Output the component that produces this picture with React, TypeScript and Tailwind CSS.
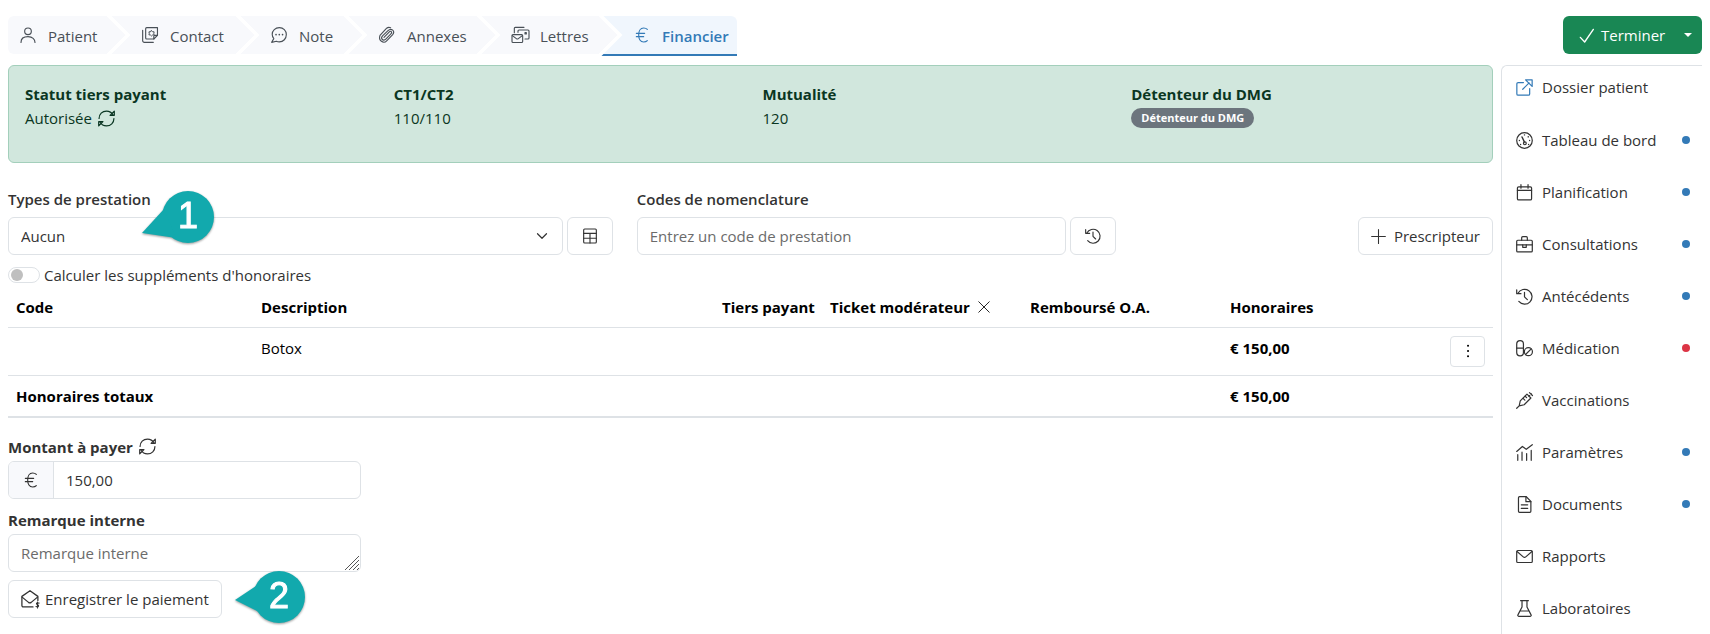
import { useState, type ReactNode } from "react";

type IconName =
  | "user" | "contact" | "note" | "clip" | "letters" | "euro" | "sync" | "external" | "gauge"
  | "calendar" | "briefcase" | "history" | "pills" | "syringe" | "chart" | "file" | "mail" | "flask"
  | "table" | "plus" | "check" | "close" | "dots" | "mailPaid" | "chevron";

const icons: Record<IconName, ReactNode> = {
  user: <><circle cx="12" cy="6.5" r="5" /><path d="M1.5 23.2c0-5 3.8-8.7 10.500-8.700s10.500 3.700 10.500 8.700" /></>,
  contact: <><path d="M5.500 2.500A1.500 1.500 0 0 1 7 1h16.200v11.500l-5.500 5.500H7a1.500 1.500 0 0 1-1.500-1.500z" /><path d="M23 12.500h-3.800a1.500 1.500 0 0 0-1.500 1.500v4" /><path d="M1 5v15.500A2.500 2.500 0 0 0 3.500 23H17" /><path d="M14.300 5.500l1.600 1.500 2.300.300-.5 2.200.5 2.200-2.300.3-1.600 1.500-1.600-1.500-2.300-.3.500-2.200-.5-2.200 2.300-.3z" strokeWidth="1.500" /></>,
  note: <><path d="M12.500 1C6.400 1 1.800 5.300 1.800 11c0 2.500.9 4.700 2.400 6.400L1 23l7-1.600c1.400.6 2.900.9 4.500.9 6 0 10.500-4.800 10.500-11S18.500 1 12.500 1z" /><path d="M7.500 11.500h.1M12.400 11.500h.1M17.300 11.500h.1" strokeWidth="2.400" /></>,
  clip: <path d="M7.500 15.500l8-8.300c2-2.100 4.800.6 2.700 2.700l-8 8.300c-3.800 3.900-8.600-.8-4.900-4.800L13.500 5.500c5-5 11.500 1 6.700 6.300l-8.700 9C6.800 25.600-1.500 20.500 1.500 12.500L11.500 1.800c1.500-1.300 4-1.500 6-.8" />,
  letters: <><path d="M3.500 8.500V2A1.500 1.500 0 0 1 5 .5h13" /><path d="M9 8V6a1.500 1.500 0 0 1 1.500-1.500H24A1.500 1.500 0 0 1 25.500 6v10.500A1.500 1.500 0 0 1 24 18h-4.500" /><rect x="0" y="11.500" width="16" height="11.800" rx="1.500" /><path d="M.5 13l6 4.500a2.500 2.500 0 0 0 3 0l6-4.500" /><path d="M19.500 8.500h2v2h-2z" /></>,
  euro: <path d="M20 3.500C18.500 2 16.500 1.500 14.500 1.500 9.500 1.500 7 6 7 12s2.500 10.500 7.500 10.500c2 0 4-.5 5.500-2M3.500 9.500h12.500M3.500 14.500h11" />,
  sync: <><path d="M1.500 12C1.500 6 6 1.500 12 1.500c4 0 7.300 2 9.300 5.500M22.500 12c0 6-4.500 10.500-10.500 10.500-4 0-7.300-2-9.300-5.500" /><path d="M23 1.500V7.500h-6zM1 22.500V16.500h6z" /></>,
  external: <><path d="M10.500 5H3a1.800 1.800 0 0 0-1.800 1.800V21A1.800 1.800 0 0 0 3 22.800h14.500a1.800 1.800 0 0 0 1.800-1.800v-7.500" /><path d="M9.500 14.500l9-9M13.500 1.200h9.300v9.300z" /></>,
  gauge: <><circle cx="12" cy="12" r="11" /><circle cx="12.500" cy="16" r="2" /><path d="M11.800 14L8.500 7M12 4v.1M4.800 12v.1M19.200 12v.1M17.300 6.800v.1M6.500 17.500v.1M17.800 17.500v.1" strokeWidth="2" /></>,
  calendar: <><rect x="2" y="4" width="20" height="18.500" rx="1.800" /><path d="M2 9h20M7 1v5M17 1v5" /></>,
  briefcase: <><rect x="1" y="6" width="22" height="16.500" rx="1.500" /><path d="M8 6V2.500A1.500 1.500 0 0 1 9.500 1h5A1.500 1.500 0 0 1 16 2.500V6M1 12.500h22" /><path d="M9.500 12.500V16h5v-3.500" /></>,
  history: <><path d="M2.800 7.500A10.500 10.500 0 1 1 4 19" /><path d="M1 2.500V8h6" /><path d="M12 6v6.500l4 4" /></>,
  pills: <><rect x="1" y="1" width="9.500" height="21.500" rx="4.700" /><path d="M1 11.500h9.500" /><circle cx="17.500" cy="16.500" r="5.700" /><path d="M13.500 20.500l8-8" /></>,
  syringe: <><path d="M1 23l3.500-3.500M4.500 19.500L6 12.500 15.500 3l5.500 5.500L11.500 18z" /><path d="M18 5.800l3.500-3.500M19 .8L23.200 5M10 9l2.500 2.500M13 6l2 2" /></>,
  chart: <path d="M1 10.500L9 3.500l5.500 4L23 1M2.500 15v8M8.500 11.500V23M15 13.500V23M21.500 9v14" />,
  file: <><path d="M3.500 2.500A1.500 1.500 0 0 1 5 1h9.500l6.500 6.500v14a1.500 1.500 0 0 1-1.500 1.500H5a1.500 1.500 0 0 1-1.500-1.500z" /><path d="M14 1v7h7M7.500 12.500h9M7.500 17.500h9" /></>,
  mail: <><rect x="1" y="3.500" width="22" height="17" rx="1.500" /><path d="M1.500 5l8.700 7.500a2.800 2.800 0 0 0 3.600 0L22.500 5" /></>,
  flask: <><path d="M6.500 1h11M8.500 1v9L2.700 21a1.300 1.300 0 0 0 1.100 2h16.400a1.300 1.300 0 0 0 1.100-2L15.500 10V1M6 15.500h12" /></>,
  table: <><rect x="2.500" y="1.500" width="19" height="21" rx="1.500" /><path d="M2.500 8h19M2.500 15.300h19M12 8v14.500" /></>,
  plus: <path d="M12 1v22M1 12h22" />,
  check: <path d="M2 15.500l6.500 7L21.500 3.500" strokeWidth="2" />,
  close: <path d="M1.500 1.500l21 21M22.500 1.500l-21 21" />,
  dots: <path d="M12 4h.1M12 12h.1M12 20h.1" strokeWidth="3" />,
  mailPaid: <><path d="M16 22.500H3A1.800 1.800 0 0 1 1.200 20.700V8.500L12 1l10.500 7.500V14" /><path d="M1.500 9.500l8.500 7a3 3 0 0 0 3.600 0L22 9.500" /><path d="M24 17.500c-3-1.500-4.500 1-2.300 2 3 1 1.800 4-1.700 2.500M22 16v8" strokeWidth="1.500" /></>,
  chevron: <path d="M3 7.500l9 9 9-9" strokeWidth="2.400" />,
};

function Icon({ name, className = "size-4" }: { name: IconName; className?: string }) {
  return (
    <svg
      viewBox="0 0 24 24"
      className={`shrink-0 overflow-visible ${className}`}
      fill="none"
      stroke="currentColor"
      strokeWidth="1.7"
      strokeLinecap="round"
      strokeLinejoin="round"
      aria-hidden="true"
    >
      {icons[name]}
    </svg>
  );
}

const tabs: { label: string; icon: IconName; width: string }[] = [
  { label: "Patient", icon: "user", width: "w-[99px]" },
  { label: "Contact", icon: "contact", width: "w-[129px]" },
  { label: "Note", icon: "note", width: "w-[108px]" },
  { label: "Annexes", icon: "clip", width: "w-[133px]" },
  { label: "Lettres", icon: "letters", width: "w-[122px]" },
  { label: "Financier", icon: "euro", width: "w-[138px]" },
];

const menu: { label: string; icon: IconName; dot?: string }[] = [
  { label: "Tableau de bord", icon: "gauge", dot: "bg-[#337ab7]" },
  { label: "Planification", icon: "calendar", dot: "bg-[#337ab7]" },
  { label: "Consultations", icon: "briefcase", dot: "bg-[#337ab7]" },
  { label: "Antécédents", icon: "history", dot: "bg-[#337ab7]" },
  { label: "Médication", icon: "pills", dot: "bg-[#dc3545]" },
  { label: "Vaccinations", icon: "syringe" },
  { label: "Paramètres", icon: "chart", dot: "bg-[#337ab7]" },
  { label: "Documents", icon: "file", dot: "bg-[#337ab7]" },
  { label: "Rapports", icon: "mail" },
  { label: "Laboratoires", icon: "flask" },
];

const control = "h-[38px] rounded-md border border-[#dee2e6] bg-white";

function Tabs() {
  return (
    <nav className="flex items-start">
      {tabs.map((tab, i) => {
        const active = tab.label === "Financier";
        return (
          <a
            key={tab.label}
            href={`#${tab.label.toLowerCase()}`}
            className={`relative flex items-center ${tab.width} ${i === 0 ? "rounded-l-md pl-3" : "pl-[35px]"} ${
              active
                ? "h-10 rounded-tr-md border-b-2 border-[#337ab7] bg-[#f0f6fd] font-semibold text-[#337ab7]"
                : "h-[38px] bg-[#f8f9fc] text-[#495057]"
            }`}
          >
            {i > 0 && (
              <svg viewBox="0 0 26 40" className="absolute top-0 left-0 h-10 w-[26px]" aria-hidden="true">
                <path d="M0 0L22 19 2 38H0z" fill="#f8f9fc" />
                <path d="M0 38h3L1 40H0z" fill="#fff" />
                <path d="M0 -2L21 19 0 40" fill="none" stroke="#fff" strokeWidth="3.500" />
              </svg>
            )}
            <Icon name={tab.icon} />
            <span className="ml-3 pt-px">{tab.label}</span>
          </a>
        );
      })}
    </nav>
  );
}

function StatusBanner() {
  return (
    <section className="min-h-[98px] rounded-md border border-[#a3cfbb] bg-[#d1e7dd] py-4 pl-4 text-[#0a3622]">
      <div className="-mr-2 grid grid-cols-4">
        <div>
          <h2 className="font-bold">Statut tiers payant</h2>
          <p className="flex items-center gap-1.5">
            Autorisée
            <button type="button" aria-label="Actualiser le statut"><Icon name="sync" className="size-[17px]" /></button>
          </p>
        </div>
        <div>
          <h2 className="font-bold">CT1/CT2</h2>
          <p>110/110</p>
        </div>
        <div>
          <h2 className="font-bold">Mutualité</h2>
          <p>120</p>
        </div>
        <div>
          <h2 className="font-bold">Détenteur du DMG</h2>
          <p className="flex h-6 items-center">
            <span className="rounded-full bg-[#6c757d] px-2.5 text-[11px] leading-5 font-bold text-white">
              Détenteur du DMG
            </span>
          </p>
        </div>
      </div>
    </section>
  );
}

function BillingForm() {
  const [supplements, setSupplements] = useState(false);

  return (
    <section className="mt-6">
      <div className="grid grid-cols-12 items-end gap-x-6">
        <div className="relative col-span-5">
          <label htmlFor="type" className="mb-1.5 block font-semibold">Types de prestation</label>
          <div className="flex gap-1">
            <div className="relative flex-1">
              <select id="type" className={`${control} w-full appearance-none px-3`}>
                <option>Aucun</option>
              </select>
              <Icon name="chevron" className="pointer-events-none absolute top-[13px] right-[15px] size-3" />
            </div>
            <button type="button" aria-label="Tableau" className={`${control} flex w-[46px] items-center justify-center`}>
              <Icon name="table" />
            </button>
          </div>
          <div className="absolute top-[3px] left-[134px]">
            <Callout n={1} />
          </div>
        </div>
        <div className="col-span-4">
          <label htmlFor="code" className="mb-1.5 block font-semibold">Codes de nomenclature</label>
          <div className="flex gap-1">
            <input
              id="code"
              placeholder="Entrez un code de prestation"
              className={`${control} min-w-0 flex-1 px-3 placeholder:text-[#6b6b6b]`}
            />
            <button type="button" aria-label="Historique" className={`${control} flex w-[46px] items-center justify-center`}>
              <Icon name="history" />
            </button>
          </div>
        </div>
        <div className="col-span-3 flex justify-end">
          <button type="button" className={`${control} flex items-center gap-2 px-3`}>
            <Icon name="plus" className="size-[15px]" />
            Prescripteur
          </button>
        </div>
      </div>

      <label className="mt-2 flex items-center gap-1">
        <input
          type="checkbox"
          role="switch"
          checked={supplements}
          onChange={(e) => setSupplements(e.target.checked)}
          className="h-4 w-8 appearance-none rounded-full border border-[#dee2e6] bg-white before:mt-px before:ml-0.5 before:block before:size-3 before:rounded-full before:bg-[#bfbfbf] checked:bg-[#337ab7] checked:before:ml-4 checked:before:bg-white"
        />
        Calculer les suppléments d'honoraires
      </label>
    </section>
  );
}

function BillingTable() {
  return (
    <table className="w-full table-fixed text-left text-black">
      <colgroup>
        <col className="w-[245px]" />
        <col />
        <col className="w-[108px]" />
        <col className="w-[200px]" />
        <col className="w-[200px]" />
        <col className="w-[212px]" />
        <col className="w-[59px]" />
      </colgroup>
      <thead>
        <tr className="h-10 border-b border-[#dee2e6] whitespace-nowrap">
          <th className="px-2">Code</th>
          <th className="px-2">Description</th>
          <th className="pl-2">Tiers payant</th>
          <th className="px-2">
            <span className="flex items-center gap-2">
              Ticket modérateur
              <button type="button" aria-label="Supprimer le ticket modérateur"><Icon name="close" className="size-3" /></button>
            </span>
          </th>
          <th className="px-2">Remboursé O.A.</th>
          <th className="px-2">Honoraires</th>
          <th />
        </tr>
      </thead>
      <tbody>
        <tr className="border-b border-[#dee2e6] align-top">
          <td />
          <td className="p-2">Botox</td>
          <td />
          <td />
          <td />
          <td className="p-2 font-bold">€ 150,00</td>
          <td className="p-2">
            <button type="button" aria-label="Actions" className="ml-auto flex h-[31px] w-[35px] items-center justify-center rounded border border-[#dee2e6]">
              <Icon name="dots" />
            </button>
          </td>
        </tr>
      </tbody>
      <tfoot>
        <tr className="border-b-2 border-[#dee2e6] font-bold">
          <td className="p-2">Honoraires totaux</td>
          <td colSpan={4} />
          <td className="p-2">€ 150,00</td>
          <td />
        </tr>
      </tfoot>
    </table>
  );
}

function PaymentForm() {
  const [amount, setAmount] = useState("150,00");

  return (
    <form className="mt-[17px] w-[353px]" onSubmit={(e) => e.preventDefault()}>
      <div className="flex items-center gap-1.5">
        <label htmlFor="amount" className="font-bold">Montant à payer</label>
        <button type="button" aria-label="Recalculer le montant"><Icon name="sync" className="size-[17px]" /></button>
      </div>
      <div className={`${control} mt-0.5 flex overflow-hidden`}>
        <span className="flex w-[45px] items-center justify-center border-r border-[#dee2e6] bg-[#f8f9fc]">
          <Icon name="euro" />
        </span>
        <input id="amount" value={amount} onChange={(e) => setAmount(e.target.value)} className="min-w-0 flex-1 px-3" />
      </div>
      <label htmlFor="remark" className="mt-[9px] block font-bold">Remarque interne</label>
      <div className="relative mt-0.5">
        <textarea
          id="remark"
          rows={1}
          placeholder="Remarque interne"
          className={`${control} block w-full resize-none overflow-hidden px-3 py-1.5 placeholder:text-[#6b6b6b]`}
        />
        <svg viewBox="0 0 14 14" className="pointer-events-none absolute right-0.5 bottom-0.5 size-[14px]" stroke="#555" aria-hidden="true">
          <path d="M0 14L14 0M4 14L14 4M8 14l6-6M12 14l2-2" />
        </svg>
      </div>
      <div className="relative mt-2 flex">
        <button type="submit" className={`${control} flex items-center gap-1.5 px-3`}>
          <Icon name="mailPaid" className="size-[18px]" />
          Enregistrer le paiement
        </button>
        <div className="absolute top-[-10px] left-[227px]">
          <Callout n={2} />
        </div>
      </div>
    </form>
  );
}

function Callout({ n }: { n: 1 | 2 }) {
  return (
    <svg viewBox="0 0 76 56" className="h-14 w-[76px] drop-shadow-[0_1px_1px_#00000066]" aria-hidden="true">
      <g fill="#12a9ad">
        <circle cx={n === 1 ? 46 : 44} cy="27" r="26" />
        {n === 1 ? <path d="M0 43L22 19 34 48z" /> : <path d="M0 30L24 14V42z" />}
      </g>
      <text
        x={n === 1 ? 46 : 44}
        y="38"
        textAnchor="middle"
        fill="#fff"
        className="font-['Liberation_Sans',sans-serif] text-[36px]"
        stroke="#fff"
      >
        {n}
      </text>
    </svg>
  );
}

function Sidebar() {
  return (
    <aside className="mt-[11px] flex-1 rounded-tl-md border-t border-l border-[#dee2e6] pt-[3px]">
      <a href="#dossier" className="mb-[17px] flex h-9 items-center gap-[9px] pl-3.5">
        <Icon name="external" className="size-[17px] text-[#337ab7]" />
        Dossier patient
      </a>
      <nav className="flex flex-col gap-4">
        {menu.map((item) => (
          <a key={item.label} href={`#${item.icon}`} className="flex h-9 items-center gap-[9px] pr-3 pl-3.5">
            <Icon name={item.icon} className="size-[17px]" />
            {item.label}
            {item.dot && <span className={`ml-auto size-2 rounded-full ${item.dot}`} />}
          </a>
        ))}
      </nav>
    </aside>
  );
}

export default function App() {
  return (
    <div className="flex min-h-screen gap-2 bg-white pr-2 pl-2 font-['Open_Sans',sans-serif] text-[15px] leading-6 text-[#333]">
      <main className="min-w-0 flex-1 pt-4">
        <Tabs />
        <div className="mt-[9px]">
          <StatusBanner />
        </div>
        <BillingForm />
        <BillingTable />
        <PaymentForm />
      </main>
      <div className="flex w-[201px] shrink-0 flex-col pt-4">
        <div className="flex h-[38px] w-[139px] self-end rounded-md bg-[#198754] text-white">
          <button type="button" className="flex flex-1 items-center gap-1.5 pl-4">
            <Icon name="check" />
            Terminer
          </button>
          <button type="button" aria-label="Plus d'options" className="flex w-7 items-center justify-center">
            <svg viewBox="0 0 8 4" className="h-1 w-2" fill="currentColor" aria-hidden="true"><path d="M0 0h8L4 4z" /></svg>
          </button>
        </div>
        <Sidebar />
      </div>
    </div>
  );
}
